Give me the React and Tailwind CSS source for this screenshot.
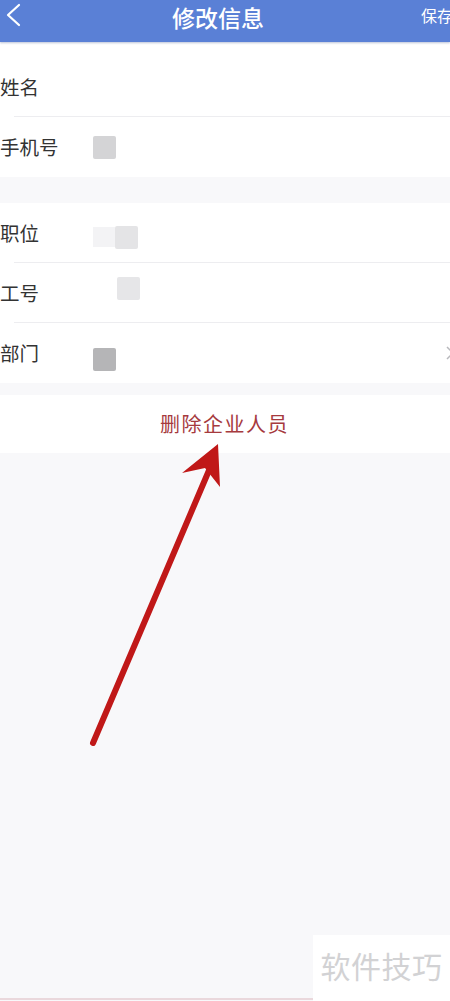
import React from "react";

const font = { fontFamily: '"Noto Sans CJK SC", "Noto Sans", sans-serif' };

function Row({ label, children, border = true, right }) {
  return (
    <div className="relative flex h-[60px] items-center bg-white">
      <span className="w-[93px] shrink-0 text-[19.5px] leading-none text-[#333]">{label}</span>
      <div className="flex flex-1 items-center">{children}</div>
      {right}
      {border && <div className="absolute bottom-0 left-[14px] right-0 h-px bg-[#ededf0]" />}
    </div>
  );
}

function Blot({ className }) {
  return <div className={`h-[23px] w-[23px] rounded-[2px] ${className}`} />;
}

export default function App() {
  return (
    <div className="relative h-[1001px] w-[450px] overflow-hidden bg-[#f8f8fa]" style={font}>
      {/* title bar */}
      <div className="relative flex h-[42px] items-center justify-center bg-[#5a80d6] shadow-[0_1px_2px_rgba(60,80,140,0.35)]">
        <svg className="absolute left-[4px] top-[3px]" width="18" height="24" viewBox="0 0 18 24">
          <path d="M15 2 L4 12 L15 22" fill="none" stroke="#fff" strokeWidth="2.2" strokeLinecap="round" strokeLinejoin="round" />
        </svg>
        <span className="ml-[-14px] mt-[-8px] text-[23px] font-medium leading-none text-white">修改信息</span>
        <span className="absolute left-[421px] top-[7px] whitespace-nowrap text-[16px] leading-none text-white">保存</span>
      </div>

      {/* basic info */}
      <div className="bg-white pt-[15px]">
        <Row label="姓名" />
        <Row label="手机号" border={false}>
          <Blot className="bg-[#d4d4d6]" />
        </Row>
      </div>

      <div className="h-[26px]" />

      {/* job info */}
      <div className="bg-white">
        <Row label="职位">
          <div className="flex items-center pt-[8px]">
            <div className="h-[20px] w-[22px] bg-[#f3f3f5]" />
            <Blot className="bg-[#e4e4e6]" />
          </div>
        </Row>
        <Row label="工号">
          <div className="ml-[24px] mt-[-10px]">
            <Blot className="bg-[#e6e6e8]" />
          </div>
        </Row>
        <Row
          label="部门"
          border={false}
          right={
            <svg className="mr-[-4px]" width="8" height="14" viewBox="0 0 8 14">
              <path d="M1 1 L7 7 L1 13" fill="none" stroke="#b8b8bc" strokeWidth="1.5" />
            </svg>
          }
        >
          <div className="mt-[12px]">
            <Blot className="bg-[#b5b5b7]" />
          </div>
        </Row>
      </div>

      <div className="h-[12px]" />

      {/* delete */}
      <div className="flex h-[58px] items-center justify-center bg-white">
        <span className="ml-[-1px] text-[20px] tracking-[1.5px] text-[#a63a3e]">删除企业人员</span>
      </div>

      {/* annotation arrow */}
      <svg className="absolute left-0 top-0" width="450" height="1001" viewBox="0 0 450 1001">
        <line x1="93" y1="743" x2="210" y2="468" stroke="#c01818" strokeWidth="6" strokeLinecap="round" />
        <path d="M218 444 L182 473 L205 468 L220 487 Z" fill="#c01818" />
      </svg>

      {/* watermark */}
      <div className="absolute bottom-0 left-[313px] flex h-[66px] w-[137px] items-center justify-center bg-white">
        <span className="mt-[-6px] text-[30px] tracking-[0.5px] text-[#d2d2d4]">软件技巧</span>
      </div>
      <div className="absolute bottom-[1px] left-0 h-[2px] w-[313px] bg-[#ead8dc]" />
    </div>
  );
}
